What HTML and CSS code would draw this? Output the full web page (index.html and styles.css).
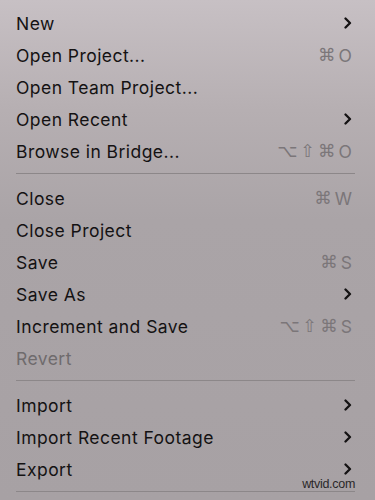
FILE: index.html
```html
<!DOCTYPE html>
<html>
<head>
<meta charset="utf-8">
<link rel="stylesheet" href="styles.css">
</head>
<body>
<div class="menu">
  <div class="item"><span class="label">New</span><svg class="chev" viewBox="0 0 8 12" width="8" height="12"><path d="M1.5 1.5 L6 6 L1.5 10.5" /></svg></div>
  <div class="item"><span class="label">Open Project...</span><span class="keys"><span>⌘</span><span>O</span></span></div>
  <div class="item"><span class="label">Open Team Project...</span></div>
  <div class="item"><span class="label">Open Recent</span><svg class="chev" viewBox="0 0 8 12" width="8" height="12"><path d="M1.5 1.5 L6 6 L1.5 10.5" /></svg></div>
  <div class="item"><span class="label">Browse in Bridge...</span><span class="keys"><span>⌥</span><span>⇧</span><span>⌘</span><span>O</span></span></div>
  <div class="sep"></div>
  <div class="item"><span class="label">Close</span><span class="keys"><span>⌘</span><span>W</span></span></div>
  <div class="item"><span class="label">Close Project</span></div>
  <div class="item"><span class="label">Save</span><span class="keys"><span>⌘</span><span>S</span></span></div>
  <div class="item"><span class="label">Save As</span><svg class="chev" viewBox="0 0 8 12" width="8" height="12"><path d="M1.5 1.5 L6 6 L1.5 10.5" /></svg></div>
  <div class="item"><span class="label">Increment and Save</span><span class="keys"><span>⌥</span><span>⇧</span><span>⌘</span><span>S</span></span></div>
  <div class="item disabled"><span class="label">Revert</span></div>
  <div class="sep"></div>
  <div class="item"><span class="label">Import</span><svg class="chev" viewBox="0 0 8 12" width="8" height="12"><path d="M1.5 1.5 L6 6 L1.5 10.5" /></svg></div>
  <div class="item"><span class="label">Import Recent Footage</span><svg class="chev" viewBox="0 0 8 12" width="8" height="12"><path d="M1.5 1.5 L6 6 L1.5 10.5" /></svg></div>
  <div class="item"><span class="label">Export</span><svg class="chev" viewBox="0 0 8 12" width="8" height="12"><path d="M1.5 1.5 L6 6 L1.5 10.5" /></svg></div>
  <div class="sep"></div>
</div>
<div class="watermark">wtvid.com</div>
</body>
</html>
```
FILE: styles.css
```css
html, body {
  margin: 0;
  padding: 0;
}
body {
  width: 375px;
  height: 500px;
  overflow: hidden;
  background: linear-gradient(180deg, #c7c0c4 0px, #b6afb2 110px, #aaa4a7 220px, #a7a1a4 500px);
  font-family: Inter, "Noto Sans", "Liberation Sans", sans-serif;
  position: relative;
}
.menu {
  display: flex;
  flex-direction: column;
  padding: 6px 0 0 0;
}
.item {
  box-sizing: border-box;
  height: 32px;
  display: flex;
  align-items: center;
  justify-content: space-between;
  padding: 2px 23px 0 16px;
  font-size: 17.5px;
  color: #141213;
}
.label {
  letter-spacing: 0.45px;
}
.disabled {
  color: #6f6b6d;
}
.keys {
  display: flex;
  align-items: center;
  gap: 3px;
  color: #7b7679;
  font-size: 17.5px;
}
.keys span {
  font-family: "DejaVu Sans", Inter, sans-serif;
}
.keys span:last-child {
  font-family: Inter, sans-serif;
}
.chev path {
  fill: none;
  stroke: #141213;
  stroke-width: 2.3;
  stroke-linecap: round;
  stroke-linejoin: round;
}
.sep {
  height: 1px;
  margin: 7px 20px 7px 16px;
  background: #8c8789;
}
.watermark {
  position: absolute;
  right: 19px;
  bottom: 9px;
  font-family: "Liberation Sans", Arial, sans-serif;
  font-size: 12.5px;
  line-height: 14px;
  letter-spacing: -0.3px;
  color: #2a2829;
  background: #a7a1a4;
  padding: 0 1px;
}
```
